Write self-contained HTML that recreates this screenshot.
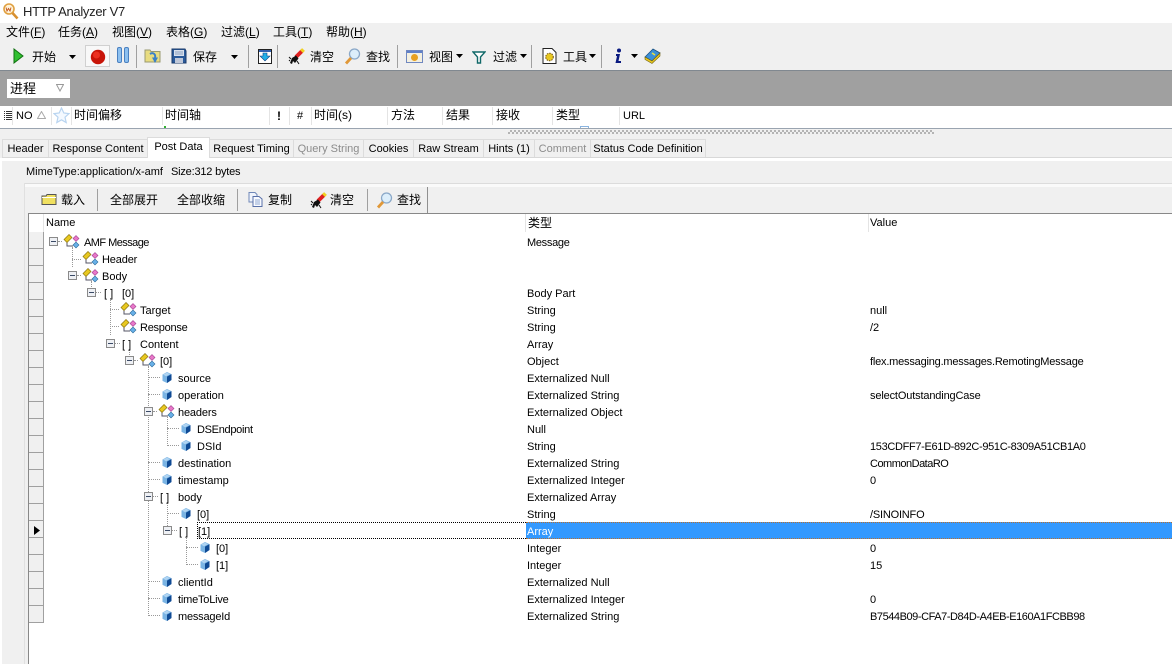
<!DOCTYPE html>
<html><head><meta charset="utf-8"><title>HTTP Analyzer V7</title>
<style>
html,body{margin:0;padding:0}
body{width:1172px;height:664px;position:relative;overflow:hidden;background:#fff;font-family:"Liberation Sans","Noto Sans CJK SC",sans-serif;font-size:11px;color:#000}
div,span,svg{position:absolute}
.r{position:absolute;white-space:nowrap;line-height:17px;height:17px;margin-top:1px}
.c{font-size:12px;font-family:"Liberation Sans","WenQuanYi Zen Hei","Noto Sans CJK SC",sans-serif;white-space:nowrap;line-height:17px;height:17px}
.s{width:1px;background:#a0a0a0}
.h{width:1px;background:#e4e4e4;top:107px;height:18px}
.b{width:9px;height:9px;box-sizing:border-box;border:1px solid #8a8a8a;background:#eef0f4}
.b:after{content:"";position:absolute;left:1px;top:3px;width:5px;height:1px;background:#3a4a66}
.lh{height:0;border-top:1px dotted #999}
.lv{width:0;border-left:1px dotted #999}
.br{font-size:11px;line-height:17px;white-space:pre}
.rh{left:29px;height:16px;background:#f0f0f0;border-bottom:1px solid #a0a0a0;border-right:1px solid #a0a0a0;width:14px}
.tab{top:139px;height:18px;line-height:19px;background:#f0f0f0;box-sizing:border-box;border:1px solid #dcdcdc;border-bottom:none;text-align:center;white-space:nowrap;font-size:11px}
.dim{color:#8c8c8c}
</style></head><body>
<svg width="0" height="0" style="left:0;top:0">
<defs>
<symbol id="nd" viewBox="0 0 17 15"><path d="M4 7V12H10" fill="none" stroke="#556" stroke-width="1"/><path d="M1 5.500L6 .5L9 3.500L4 8.500Z" fill="#e8c820" stroke="#8a7410" stroke-width=".7"/><path d="M10 4.500L13 1.500L16 4.500L13 7.500Z" fill="#e878c8" stroke="#a04090" stroke-width=".6"/><path d="M10 11L13 8L16 11L13 14Z" fill="#68b0e8" stroke="#2a6a9a" stroke-width=".6"/></symbol>
<symbol id="cb" viewBox="0 0 10 13" preserveAspectRatio="none"><path d="M5 0L9.500 2.500V9.500L5 13L.5 10.500V3Z" fill="#7ab4e4"/><path d="M5 5.500L9.500 2.500V9.500L5 13Z" fill="#0f4a94"/><path d="M1 3L5 .8L8 2.500L4 5Z" fill="#b0d4f2"/></symbol>
<symbol id="mg" viewBox="0 0 17 17"><circle cx="10.500" cy="6" r="5" fill="#dcEEfb" stroke="#8aa8c8" stroke-width="1.300"/><path d="M7 10L2 15.500" stroke="#e09838" stroke-width="2.800"/></symbol>
<symbol id="br" viewBox="0 0 17 17"><path d="M8 9L14 3" stroke="#e02020" stroke-width="4"/><path d="M13.500 3.500L15.500 1.500" stroke="#f0d020" stroke-width="4"/><path d="M2 15L4 10L8 7.500L10.500 10.500L7 15L5 13L4 16Z" fill="#101010"/><path d="M1 9L3 11M9 13L11 16M1 12L2 13" stroke="#101010"/></symbol>
</defs></svg>

<!-- title -->
<svg style="left:2px;top:3px" width="17" height="17" viewBox="0 0 17 17"><circle cx="7" cy="6" r="5" fill="#fff3d8" stroke="#e0a040" stroke-width="1.600"/><path d="M10.500 10L15.500 15.500" stroke="#d89030" stroke-width="2.600"/><path d="M4 4.500L5 8L6.500 5.500L8 8L9 4.500" fill="none" stroke="#c05018" stroke-width=".9"/></svg>
<div style="left:23px;top:3px;font-size:13px;line-height:17px;color:#222;white-space:nowrap;letter-spacing:-.3px">HTTP Analyzer V7</div>

<!-- menu & toolbar -->
<div style="left:0;top:23px;width:1172px;height:47px;background:#f0f0f0"></div>
<div class="c" style="left:6px;top:24px">文件(<u>F</u>)</div>
<div class="c" style="left:58px;top:24px">任务(<u>A</u>)</div>
<div class="c" style="left:112px;top:24px">视图(<u>V</u>)</div>
<div class="c" style="left:166px;top:24px">表格(<u>G</u>)</div>
<div class="c" style="left:221px;top:24px">过滤(<u>L</u>)</div>
<div class="c" style="left:273px;top:24px">工具(<u>T</u>)</div>
<div class="c" style="left:326px;top:24px">帮助(<u>H</u>)</div>

<svg style="left:13px;top:48px" width="11" height="16" viewBox="0 0 11 16"><path d="M1 1L10 8L1 15Z" fill="#30c030" stroke="#107010"/></svg>
<div class="c" style="left:32px;top:49px">开始</div>
<svg style="left:69px;top:55px" width="7" height="4"><path d="M0 0H7L3.500 4Z" fill="#000"/></svg>
<div style="left:85px;top:45px;width:25px;height:22px;background:#f8f8f8;border:1px solid #d0d0d0;box-sizing:border-box"></div>
<svg style="left:90px;top:49px" width="16" height="16"><circle cx="8" cy="8" r="7.200" fill="#c81408"/><circle cx="6.500" cy="6" r="3.500" fill="#ec3020"/></svg>
<div style="left:117px;top:47px;width:5px;height:16px;background:#8cc0f0;border:1px solid #4a80c0;box-sizing:border-box;border-radius:2px"></div>
<div style="left:124px;top:47px;width:5px;height:16px;background:#8cc0f0;border:1px solid #4a80c0;box-sizing:border-box;border-radius:2px"></div>
<div class="s" style="left:136px;top:45px;height:23px"></div>
<svg style="left:144px;top:48px" width="17" height="16" viewBox="0 0 17 16"><path d="M1 2H6L7 3.500H16V14H1Z" fill="#e8dc80" stroke="#9a9a70"/><path d="M6 6C9 4 12 6 11 10" fill="none" stroke="#3a80c8" stroke-width="2"/><path d="M8 9.500H14L11 15Z" fill="#3a80c8"/></svg>
<svg style="left:171px;top:48px" width="16" height="16" viewBox="0 0 16 16"><path d="M1 1H14L15 3V15H1Z" fill="#2a5a9a" stroke="#1a3a6a"/><rect x="3" y="2" width="10" height="6" fill="#d8e0ec"/><path d="M4 4H12M4 6H12" stroke="#8aa0c0"/><rect x="4" y="10" width="8" height="5" fill="#c0c8d8"/></svg>
<div class="c" style="left:193px;top:49px">保存</div>
<svg style="left:231px;top:55px" width="7" height="4"><path d="M0 0H7L3.500 4Z" fill="#000"/></svg>
<div class="s" style="left:248px;top:45px;height:23px"></div>
<svg style="left:258px;top:49px" width="14" height="15" viewBox="0 0 14 15"><rect x=".5" y=".5" width="13" height="14" fill="#fff" stroke="#222"/><rect x="1" y="1" width="12" height="2" fill="#3060b0"/><path d="M5 4H9V7H12L7 12L2 7H5Z" fill="#20b0e8" stroke="#104080" stroke-width=".6"/></svg>
<div class="s" style="left:277px;top:45px;height:23px"></div>
<svg style="left:288px;top:48px" width="17" height="17"><use href="#br"/></svg>
<div class="c" style="left:310px;top:49px">清空</div>
<svg style="left:344px;top:48px" width="17" height="17"><use href="#mg"/></svg>
<div class="c" style="left:366px;top:49px">查找</div>
<div class="s" style="left:397px;top:45px;height:23px"></div>
<svg style="left:406px;top:50px" width="17" height="13" viewBox="0 0 17 13"><rect x=".5" y=".5" width="16" height="12" fill="#f4f0e0" stroke="#7088c0"/><rect x="1" y="1" width="15" height="2" fill="#6080c8"/><circle cx="8.500" cy="7.500" r="3.500" fill="#e8a020"/></svg>
<div class="c" style="left:429px;top:49px">视图</div>
<svg style="left:456px;top:54px" width="7" height="4"><path d="M0 0H7L3.500 4Z" fill="#000"/></svg>
<svg style="left:472px;top:51px" width="14" height="13" viewBox="0 0 14 13"><path d="M1 1H13L8.500 6V12H5.500V6Z" fill="#fff" stroke="#106868" stroke-width="1.400"/></svg>
<div class="c" style="left:493px;top:49px">过滤</div>
<svg style="left:520px;top:54px" width="7" height="4"><path d="M0 0H7L3.500 4Z" fill="#000"/></svg>
<div class="s" style="left:531px;top:45px;height:23px"></div>
<svg style="left:542px;top:48px" width="15" height="16" viewBox="0 0 15 16"><path d="M1 .5H10L14 4.500V15.500H1Z" fill="#fff" stroke="#222"/><circle cx="7.500" cy="9" r="3.800" fill="#e8c820" stroke="#705010" stroke-dasharray="1.500 1"/></svg>
<div class="c" style="left:563px;top:49px">工具</div>
<svg style="left:589px;top:54px" width="7" height="4"><path d="M0 0H7L3.500 4Z" fill="#000"/></svg>
<div class="s" style="left:601px;top:45px;height:23px"></div>
<svg style="left:614px;top:48px" width="9" height="16" viewBox="0 0 9 16"><circle cx="5" cy="2.500" r="2" fill="#0a1a80"/><path d="M2 6H6L4.500 13H7V15H1.500L3 8H2Z" fill="#0a1a80"/></svg>
<svg style="left:631px;top:54px" width="7" height="4"><path d="M0 0H7L3.500 4Z" fill="#000"/></svg>
<svg style="left:644px;top:48px" width="17" height="16" viewBox="0 0 17 16"><path d="M1 9L9 1L16 5L8 13Z" fill="#3a90d8" stroke="#1a5080" stroke-width=".8"/><path d="M1 9L8 13L16 5V8L8 15.500L1 11.500Z" fill="#e8c820" stroke="#706010" stroke-width=".6"/><path d="M8 5L11 7" stroke="#e8e040" stroke-width="1.500"/></svg>

<!-- gray band -->
<div style="left:0;top:70px;width:1172px;height:36px;background:#a0a0a0"></div>
<div style="left:0;top:70px;width:1172px;height:1px;background:#808890"></div>
<div style="left:7px;top:79px;width:63px;height:19px;background:#fff"></div>
<div class="c" style="left:10px;top:80px;font-size:13px">进程</div>
<svg style="left:56px;top:84px" width="8" height="8"><path d="M.5 .5H7.500L4 7Z" fill="#fff" stroke="#999"/></svg>

<!-- column header -->
<div style="left:0;top:106px;width:1172px;height:22px;background:#fff"></div>
<div style="left:0;top:128px;width:1172px;height:536px;background:#f0f0f0"></div>
<div style="left:0;top:128px;width:1172px;height:1px;background:#9aa4b0"></div>
<svg style="left:4px;top:111px" width="8" height="9"><path d="M0 .5H8M0 2.500H8M0 4.500H8M0 6.500H8M0 8.500H8" stroke="#333" stroke-dasharray="1 1 6 0"/></svg>
<div class="h" style="left:12px"></div>
<div class="r" style="left:16px;top:107px">NO</div>
<svg style="left:37px;top:111px" width="9" height="8"><path d="M4.500 .5L8.500 7.500H.5Z" fill="#fff" stroke="#aaa"/></svg>
<div class="h" style="left:51px"></div>
<svg style="left:53px;top:107px" width="17" height="17" viewBox="0 0 17 17"><path d="M8.500 1L10.800 6L16 6.600L12 10.200L13.200 15.500L8.500 12.800L3.800 15.500L5 10.200L1 6.600L6.200 6Z" fill="#f4f9ff" stroke="#b8d4f0" stroke-width="1.200"/></svg>
<div class="h" style="left:71px"></div>
<div class="c" style="left:74px;top:107px">时间偏移</div>
<div class="h" style="left:162px"></div>
<div class="c" style="left:165px;top:107px">时间轴</div>
<div style="left:164px;top:126px;width:2px;height:2px;background:#30b030"></div>
<div class="h" style="left:269px"></div>
<div class="r" style="left:277px;top:107px;font-size:12px;font-weight:bold">!</div>
<div class="h" style="left:289px"></div>
<div class="r" style="left:297px;top:107px">#</div>
<div class="h" style="left:311px"></div>
<div class="c" style="left:314px;top:107px">时间(s)</div>
<div class="h" style="left:387px"></div>
<div class="c" style="left:391px;top:107px">方法</div>
<div class="h" style="left:442px"></div>
<div class="c" style="left:446px;top:107px">结果</div>
<div class="h" style="left:492px"></div>
<div class="c" style="left:496px;top:107px">接收</div>
<div class="h" style="left:552px"></div>
<div class="c" style="left:556px;top:107px">类型</div>
<div class="h" style="left:619px"></div>
<div class="r" style="left:623px;top:107px">URL</div>
<div style="left:580px;top:126px;width:9px;height:2px;border:1px solid #8ab4e0;border-bottom:none;box-sizing:border-box"></div>

<!-- splitter -->
<div style="left:508px;top:130px;width:426px;height:4px;background:repeating-conic-gradient(#b4b4b4 0 25%,#f0f0f0 0 50%) 0 0/4px 4px"></div>

<!-- tabs -->
<div style="left:2px;top:157px;width:1170px;height:1px;background:#d8d8d8"></div>
<div class="tab" style="left:2px;width:47px">Header</div>
<div class="tab" style="left:48px;width:100px">Response Content</div>
<div class="tab" style="left:147px;top:137px;width:63px;height:21px;background:#fff;z-index:2">Post Data</div>
<div class="tab" style="left:209px;width:85px">Request Timing</div>
<div class="tab dim" style="left:293px;width:71px">Query String</div>
<div class="tab" style="left:363px;width:51px">Cookies</div>
<div class="tab" style="left:413px;width:71px">Raw Stream</div>
<div class="tab" style="left:483px;width:52px">Hints (1)</div>
<div class="tab dim" style="left:534px;width:57px">Comment</div>
<div class="tab" style="left:590px;width:116px">Status Code Definition</div>

<!-- panel -->
<div style="left:0;top:158px;width:1172px;height:3px;background:#fff"></div>
<div style="left:0;top:158px;width:2px;height:506px;background:#fff"></div>
<div class="r" style="left:26px;top:163px">MimeType:application/x-amf</div>
<div class="r" style="left:171px;top:163px;letter-spacing:-.2px">Size:312 bytes</div>
<div style="left:24px;top:183px;width:1148px;height:1px;background:#dcdcdc"></div>
<div style="left:25px;top:184px;width:1147px;height:3px;background:#fafafa"></div>
<div style="left:24px;top:183px;width:1px;height:481px;background:#e0e0e0"></div>

<!-- inner toolbar -->
<div style="left:29px;top:187px;width:399px;height:26px;background:#f0f0f0;border-right:1px solid #909090;box-sizing:border-box"></div>
<svg style="left:41px;top:193px" width="17" height="13" viewBox="0 0 17 13"><path d="M1 3H5L6 1.500H15V11.500H1Z" fill="#f0e060" stroke="#555"/><path d="M1 4.500H15" stroke="#fff"/></svg>
<div class="c" style="left:61px;top:192px">载入</div>
<div class="s" style="left:97px;top:189px;height:22px"></div>
<div class="c" style="left:110px;top:192px">全部展开</div>
<div class="c" style="left:177px;top:192px">全部收缩</div>
<div class="s" style="left:237px;top:189px;height:22px"></div>
<svg style="left:248px;top:192px" width="15" height="15" viewBox="0 0 15 15"><path d="M1 .5H7L9 2.500V10H1Z" fill="#f0f4fc" stroke="#7088b8"/><path d="M5 4.500H11L14 7V14.500H5Z" fill="#f8faff" stroke="#5870a8"/><path d="M7 8H12M7 10H12M7 12H12" stroke="#90a8d0"/></svg>
<div class="c" style="left:268px;top:192px">复制</div>
<svg style="left:310px;top:192px" width="17" height="17"><use href="#br"/></svg>
<div class="c" style="left:330px;top:192px">清空</div>
<div class="s" style="left:367px;top:189px;height:22px"></div>
<svg style="left:376px;top:192px" width="17" height="17"><use href="#mg"/></svg>
<div class="c" style="left:397px;top:192px">查找</div>

<!-- grid -->
<div style="left:28px;top:213px;width:1144px;height:451px;background:#fff"></div>
<div style="left:28px;top:213px;width:1144px;height:1px;background:#888"></div>
<div style="left:28px;top:213px;width:1px;height:451px;background:#888"></div>
<div class="h" style="left:43px;top:214px"></div>
<div class="h" style="left:525px;top:214px"></div>
<div class="h" style="left:868px;top:214px"></div>
<div class="r" style="left:46px;top:214px">Name</div>
<div class="c" style="left:528px;top:215px">类型</div>
<div class="r" style="left:870px;top:214px">Value</div>

<!-- row headers -->
<div class="rh" style="top:232px"></div><div class="rh" style="top:249px"></div><div class="rh" style="top:266px"></div><div class="rh" style="top:283px"></div><div class="rh" style="top:300px"></div><div class="rh" style="top:317px"></div><div class="rh" style="top:334px"></div><div class="rh" style="top:351px"></div><div class="rh" style="top:368px"></div><div class="rh" style="top:385px"></div><div class="rh" style="top:402px"></div><div class="rh" style="top:419px"></div><div class="rh" style="top:436px"></div><div class="rh" style="top:453px"></div><div class="rh" style="top:470px"></div><div class="rh" style="top:487px"></div><div class="rh" style="top:504px"></div><div class="rh" style="top:521px"></div><div class="rh" style="top:538px"></div><div class="rh" style="top:555px"></div><div class="rh" style="top:572px"></div><div class="rh" style="top:589px"></div><div class="rh" style="top:606px"></div>
<svg style="left:34px;top:526px" width="6" height="9"><path d="M0 0L6 4.500L0 9Z" fill="#000"/></svg>

<!-- selected row -->
<div style="left:526px;top:522px;width:646px;height:17px;background:#3399ff;box-sizing:border-box;border-top:1px dotted #b87030;border-bottom:1px dotted #b87030"></div>
<div style="left:197px;top:522px;width:329px;height:17px;box-sizing:border-box;border-top:1px dotted #000;border-bottom:1px dotted #000;border-left:1px dotted #000"></div>

<!-- tree connectors -->
<div class="lv" style="left:72px;top:247px;height:20px"></div>
<div class="lh" style="left:72px;top:259px;width:9px"></div>
<div class="lh" style="left:58px;top:241px;width:4px"></div>
<div class="lh" style="left:77px;top:275px;width:4px"></div>
<div class="lv" style="left:91px;top:281px;height:6px"></div>
<div class="lh" style="left:96px;top:292px;width:5px"></div>
<div class="lv" style="left:110px;top:298px;height:37px"></div>
<div class="lh" style="left:110px;top:309px;width:9px"></div>
<div class="lh" style="left:110px;top:326px;width:9px"></div>
<div class="lh" style="left:115px;top:343px;width:5px"></div>
<div class="lv" style="left:129px;top:349px;height:6px"></div>
<div class="lh" style="left:134px;top:360px;width:4px"></div>
<div class="lv" style="left:148px;top:366px;height:250px"></div>
<div class="lh" style="left:148px;top:377px;width:12px"></div>
<div class="lh" style="left:148px;top:394px;width:12px"></div>
<div class="lh" style="left:153px;top:411px;width:4px"></div>
<div class="lv" style="left:167px;top:417px;height:29px"></div>
<div class="lh" style="left:167px;top:428px;width:12px"></div>
<div class="lh" style="left:167px;top:445px;width:12px"></div>
<div class="lh" style="left:148px;top:462px;width:12px"></div>
<div class="lh" style="left:148px;top:479px;width:12px"></div>
<div class="lh" style="left:153px;top:496px;width:5px"></div>
<div class="lv" style="left:167px;top:502px;height:24px"></div>
<div class="lh" style="left:167px;top:513px;width:12px"></div>
<div class="lh" style="left:172px;top:530px;width:5px"></div>
<div class="lv" style="left:186px;top:536px;height:29px"></div>
<div class="lh" style="left:186px;top:547px;width:12px"></div>
<div class="lh" style="left:186px;top:564px;width:12px"></div>
<div class="lh" style="left:148px;top:581px;width:12px"></div>
<div class="lh" style="left:148px;top:598px;width:12px"></div>
<div class="lh" style="left:148px;top:615px;width:12px"></div>

<!-- expanders -->
<div class="b" style="left:49px;top:237px"></div>
<div class="b" style="left:68px;top:271px"></div>
<div class="b" style="left:87px;top:288px"></div>
<div class="b" style="left:106px;top:339px"></div>
<div class="b" style="left:125px;top:356px"></div>
<div class="b" style="left:144px;top:407px"></div>
<div class="b" style="left:144px;top:492px"></div>
<div class="b" style="left:163px;top:526px"></div>

<!-- node icons -->
<svg style="left:63px;top:234px" width="17" height="15"><use href="#nd"/></svg>
<svg style="left:82px;top:251px" width="17" height="15"><use href="#nd"/></svg>
<svg style="left:82px;top:268px" width="17" height="15"><use href="#nd"/></svg>
<svg style="left:120px;top:302px" width="17" height="15"><use href="#nd"/></svg>
<svg style="left:120px;top:319px" width="17" height="15"><use href="#nd"/></svg>
<svg style="left:139px;top:353px" width="17" height="15"><use href="#nd"/></svg>
<svg style="left:158px;top:404px" width="17" height="15"><use href="#nd"/></svg>

<!-- cube icons -->
<svg style="left:162px;top:372px" width="10" height="11"><use href="#cb"/></svg>
<svg style="left:162px;top:389px" width="10" height="11"><use href="#cb"/></svg>
<svg style="left:181px;top:423px" width="10" height="11"><use href="#cb"/></svg>
<svg style="left:181px;top:440px" width="10" height="11"><use href="#cb"/></svg>
<svg style="left:162px;top:457px" width="10" height="11"><use href="#cb"/></svg>
<svg style="left:162px;top:474px" width="10" height="11"><use href="#cb"/></svg>
<svg style="left:181px;top:508px" width="10" height="11"><use href="#cb"/></svg>
<svg style="left:200px;top:542px" width="10" height="11"><use href="#cb"/></svg>
<svg style="left:200px;top:559px" width="10" height="11"><use href="#cb"/></svg>
<svg style="left:162px;top:576px" width="10" height="11"><use href="#cb"/></svg>
<svg style="left:162px;top:593px" width="10" height="11"><use href="#cb"/></svg>
<svg style="left:162px;top:610px" width="10" height="11"><use href="#cb"/></svg>

<div style="left:0;top:1px;width:1172px">
<!-- names -->
<div class="r" style="left:84px;top:233px;letter-spacing:-.55px">AMF Message</div>
<div class="r" style="left:102px;top:250px;letter-spacing:-.15px">Header</div>
<div class="r" style="left:102px;top:267px">Body</div>
<div class="r br" style="left:104px;top:284px">[ ]</div><div class="r" style="left:122px;top:284px">[0]</div>
<div class="r" style="left:140px;top:301px">Target</div>
<div class="r" style="left:140px;top:318px;letter-spacing:-.25px">Response</div>
<div class="r br" style="left:122px;top:335px">[ ]</div><div class="r" style="left:140px;top:335px">Content</div>
<div class="r" style="left:160px;top:352px">[0]</div>
<div class="r" style="left:178px;top:369px">source</div>
<div class="r" style="left:178px;top:386px">operation</div>
<div class="r" style="left:178px;top:403px;letter-spacing:-.15px">headers</div>
<div class="r" style="left:197px;top:420px;letter-spacing:-.3px">DSEndpoint</div>
<div class="r" style="left:197px;top:437px">DSId</div>
<div class="r" style="left:178px;top:454px">destination</div>
<div class="r" style="left:178px;top:471px">timestamp</div>
<div class="r br" style="left:160px;top:488px">[ ]</div><div class="r" style="left:178px;top:488px">body</div>
<div class="r" style="left:197px;top:505px">[0]</div>
<div class="r br" style="left:179px;top:522px">[ ]</div><div class="r" style="left:198px;top:522px">[1]</div>
<div class="r" style="left:216px;top:539px">[0]</div>
<div class="r" style="left:216px;top:556px">[1]</div>
<div class="r" style="left:178px;top:573px">clientId</div>
<div class="r" style="left:178px;top:590px;letter-spacing:-.2px">timeToLive</div>
<div class="r" style="left:178px;top:607px;letter-spacing:-.2px">messageId</div>

<!-- types -->
<div class="r" style="left:527px;top:233px;letter-spacing:-.3px">Message</div>
<div class="r" style="left:527px;top:284px">Body Part</div>
<div class="r" style="left:527px;top:301px">String</div>
<div class="r" style="left:527px;top:318px">String</div>
<div class="r" style="left:527px;top:335px">Array</div>
<div class="r" style="left:527px;top:352px">Object</div>
<div class="r" style="left:527px;top:369px">Externalized Null</div>
<div class="r" style="left:527px;top:386px">Externalized String</div>
<div class="r" style="left:527px;top:403px">Externalized Object</div>
<div class="r" style="left:527px;top:420px">Null</div>
<div class="r" style="left:527px;top:437px">String</div>
<div class="r" style="left:527px;top:454px">Externalized String</div>
<div class="r" style="left:527px;top:471px">Externalized Integer</div>
<div class="r" style="left:527px;top:488px">Externalized Array</div>
<div class="r" style="left:527px;top:505px">String</div>
<div class="r" style="left:527px;top:522px;color:#fff">Array</div>
<div class="r" style="left:527px;top:539px">Integer</div>
<div class="r" style="left:527px;top:556px">Integer</div>
<div class="r" style="left:527px;top:573px">Externalized Null</div>
<div class="r" style="left:527px;top:590px">Externalized Integer</div>
<div class="r" style="left:527px;top:607px">Externalized String</div>

<!-- values -->
<div class="r" style="left:870px;top:301px">null</div>
<div class="r" style="left:870px;top:318px">/2</div>
<div class="r" style="left:870px;top:352px;letter-spacing:-.2px">flex.messaging.messages.RemotingMessage</div>
<div class="r" style="left:870px;top:386px;letter-spacing:-.15px">selectOutstandingCase</div>
<div class="r" style="left:870px;top:437px;letter-spacing:-.33px">153CDFF7-E61D-892C-951C-8309A51CB1A0</div>
<div class="r" style="left:870px;top:454px;letter-spacing:-.5px">CommonDataRO</div>
<div class="r" style="left:870px;top:471px">0</div>
<div class="r" style="left:870px;top:505px;letter-spacing:-.2px">/SINOINFO</div>
<div class="r" style="left:870px;top:539px">0</div>
<div class="r" style="left:870px;top:556px">15</div>
<div class="r" style="left:870px;top:590px">0</div>
<div class="r" style="left:870px;top:607px;letter-spacing:-.44px">B7544B09-CFA7-D84D-A4EB-E160A1FCBB98</div>
</div>
</body></html>
